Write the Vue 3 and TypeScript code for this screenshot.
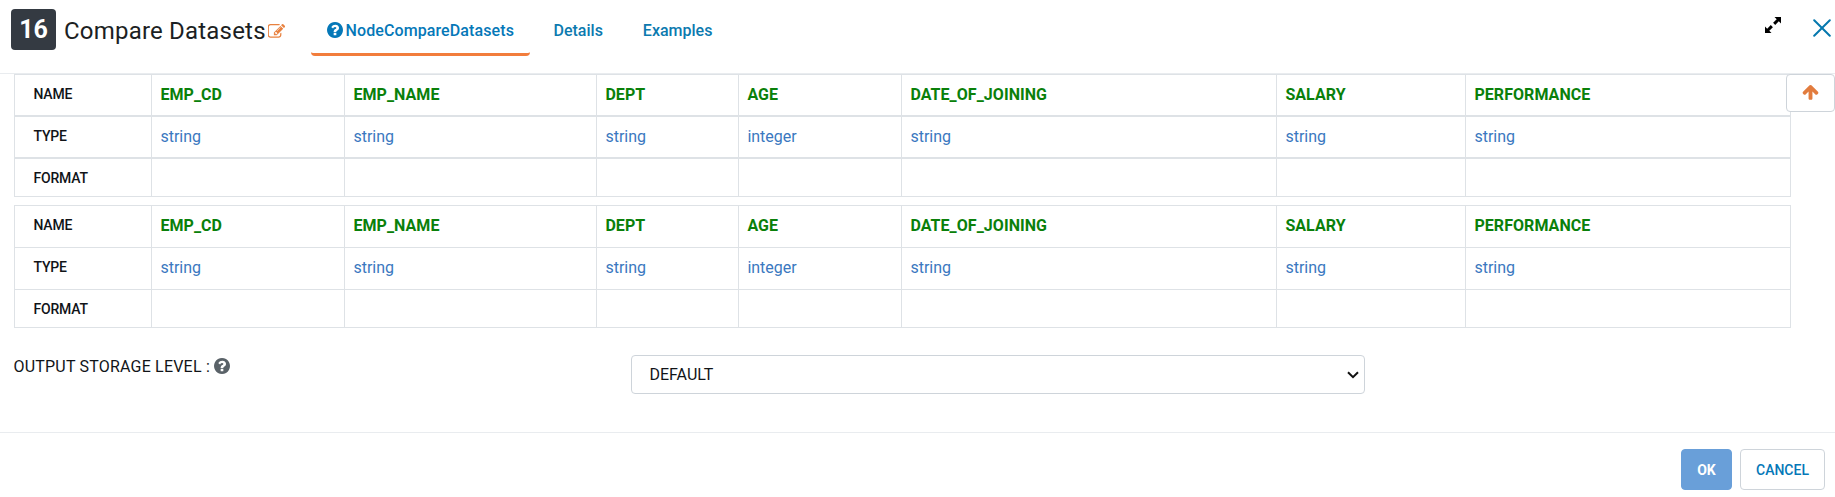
<script setup lang="ts">
import { ref } from 'vue'

interface Column {
  name: string
  type: string
  format: string
}

const columns: Column[] = [
  { name: 'EMP_CD', type: 'string', format: '' },
  { name: 'EMP_NAME', type: 'string', format: '' },
  { name: 'DEPT', type: 'string', format: '' },
  { name: 'AGE', type: 'integer', format: '' },
  { name: 'DATE_OF_JOINING', type: 'string', format: '' },
  { name: 'SALARY', type: 'string', format: '' },
  { name: 'PERFORMANCE', type: 'string', format: '' },
]

const rows: { label: string; key: keyof Column }[] = [
  { label: 'NAME', key: 'name' },
  { label: 'TYPE', key: 'type' },
  { label: 'FORMAT', key: 'format' },
]

const schemas = [
  { id: 1, columns, split: true },
  { id: 2, columns, split: false },
]

const tabs = ['NodeCompareDatasets', 'Details', 'Examples']
const activeTab = ref(tabs[0])
const storageLevel = ref('DEFAULT')

const questionPath =
  'M1024 1376v-192q0-14-9-23t-23-9h-192q-14 0-23 9t-9 23v192q0 14 9 23t23 9h192q14 0 23-9t9-23zm256-672q0-88-55.5-163t-138.5-116-170-41q-243 0-371 213-15 24 8 42l132 100q7 6 19 6 16 0 25-12 53-68 86-92 34-24 86-24 48 0 85.5 26t37.5 59q0 38-20 61t-68 45q-63 28-115.5 86.5t-52.5 125.5v36q0 14 9 23t23 9h192q14 0 23-9t9-23q0-19 21.5-49.5t54.5-49.5q32-18 49-28.5t46-35 44.5-48 28-60.5 12.5-81zm384 192q0 209-103 385.5t-279.5 279.5-385.5 103-385.5-103-279.5-279.5-103-385.5 103-385.5 279.5-279.5 385.5-103 385.5 103 279.5 279.5 103 385.5z'
</script>

<template>
  <div class="dialog">
    <header class="header">
      <span class="badge">16</span>
      <h1 class="title">Compare Datasets</h1>
      <svg class="edit" viewBox="128 128 1664 1536">
        <path d="M888 1184l116-116-152-152-116 116v56h96v96h56zm440-720q-16-16-33 1l-350 350q-17 17-1 33t33-1l350-350q17-17 1-33zm80 594v190q0 119-84.5 203.5t-203.5 84.5h-832q-119 0-203.5-84.5t-84.5-203.5v-832q0-119 84.5-203.5t203.5-84.5h832q63 0 117 25 15 7 18 23 3 17-9 29l-49 49q-14 14-32 8-23-6-45-6h-832q-66 0-113 47t-47 113v832q0 66 47 113t113 47h832q66 0 113-47t47-113v-126q0-13 9-22l64-64q15-15 35-7t20 29zm-96-738l288 288-672 672h-288v-288zm444 132l-92 92-288-288 92-92q28-28 68-28t68 28l152 152q28 28 28 68t-28 68z" />
      </svg>
      <nav class="tabs">
        <a v-for="(tab, i) in tabs" :key="tab" class="tab" :class="{ active: tab === activeTab }" @click="activeTab = tab">
          <svg v-if="i === 0" class="question" viewBox="128 128 1536 1536"><path :d="questionPath" /></svg>
          <span>{{ tab }}</span>
        </a>
      </nav>
      <div class="window-actions">
        <svg class="expand" viewBox="0 0 16 16">
          <path d="M9.5 0H16v6.5l-2.2-2.2-3.6 3.6-2.1-2.1 3.6-3.6zM6.5 16H0V9.5l2.2 2.2 3.6-3.6 2.1 2.1-3.6 3.6z" />
        </svg>
        <svg class="close" viewBox="0 0 18 18"><path d="M1.2 1.2l15.6 15.6M16.8 1.2L1.2 16.8" /></svg>
      </div>
    </header>

    <main class="body">
      <button class="scroll-top" type="button">
        <svg viewBox="53 128 1686 1536"><path d="M1675 971q0 51-37 90l-75 75q-38 38-91 38-54 0-90-38l-294-293v704q0 52-37.5 84.5t-90.5 32.5h-128q-53 0-90.5-32.5t-37.5-84.5v-704l-294 293q-36 38-90 38t-90-38l-75-75q-38-38-38-90 0-53 38-91l651-651q35-37 90-37 54 0 91 37l651 651q37 39 37 91z" /></svg>
      </button>
      <div v-for="schema in schemas" :key="schema.id" class="schema" :class="{ split: schema.split }">
        <div v-for="row in rows" :key="row.key" class="row" :class="row.key">
          <div class="cell label">{{ row.label }}</div>
          <div v-for="col in schema.columns" :key="col.name" class="cell">{{ col[row.key] }}</div>
        </div>
      </div>
      <div class="field">
        <label class="field-label">
          <span>OUTPUT STORAGE LEVEL :</span>
          <svg class="question" viewBox="128 128 1536 1536"><path :d="questionPath" /></svg>
        </label>
        <div class="select-wrap">
          <select v-model="storageLevel" class="select">
            <option>DEFAULT</option>
          </select>
          <svg class="chevron" viewBox="0 0 12 8"><path d="M1 1.2l5 5 5-5" /></svg>
        </div>
      </div>
    </main>

    <footer class="footer">
      <button class="btn ok" type="button">OK</button>
      <button class="btn cancel" type="button">CANCEL</button>
    </footer>
  </div>
</template>

<style>
body {
  background: #fff;
}
</style>

<style scoped>
.dialog,
.dialog * {
  box-sizing: border-box;
}
.dialog {
  display: flex;
  flex-direction: column;
  height: 497px;
  overflow: hidden;
  font-family: Roboto, sans-serif;
  font-size: 16px;
  color: #111418;
}
svg {
  display: block;
  fill: currentColor;
  flex: none;
}
.header {
  display: flex;
  align-items: flex-start;
  height: 74px;
  border-bottom: 1px solid #e9ecef;
}
.badge {
  width: 45px;
  height: 41px;
  margin: 9px 0 0 11px;
  border-radius: 4px;
  background: #343a42;
  color: #fff;
  font-size: 25px;
  font-weight: 700;
  line-height: 42px;
  text-align: center;
}
.title {
  flex: none;
  width: 203px;
  margin: 15px 0 0 8px;
  color: #1c1f23;
  font-size: 24px;
  font-weight: 400;
  line-height: 32px;
  letter-spacing: 0.2px;
  white-space: nowrap;
}
.edit {
  width: 18px;
  height: 15px;
  margin: 24px 0 0 1px;
  color: #e8813f;
}
.tabs {
  display: flex;
  gap: 8px;
  margin-left: 25px;
}
.tab {
  display: flex;
  height: 56px;
  padding: 8px 16px 0;
  border-bottom: 3px solid transparent;
  border-radius: 4px;
  color: #0c7aaf;
  font-weight: 500;
  line-height: 46px;
}
.tab.active {
  width: 219px;
  margin-right: -0.5px;
  border-bottom-color: #f27d3c;
  color: #0578b8;
}
.tab.active span {
  letter-spacing: 0.1px;
}
.question {
  width: 16px;
  height: 16px;
}
.tab .question {
  margin: 14px 3px 0 -0.5px;
}
.window-actions {
  display: flex;
  margin-left: auto;
}
.expand {
  width: 16px;
  height: 16px;
  margin: 17px 32px 0 0;
  color: #000;
}
.close {
  width: 18px;
  height: 18px;
  margin: 19px 4px 0 0;
  stroke: #0578ae;
  stroke-width: 2;
  stroke-linecap: round;
}
.body {
  position: relative;
  flex: none;
  height: 358px;
  padding-left: 14px;
}
.scroll-top {
  position: absolute;
  top: 0;
  right: 0;
  display: flex;
  justify-content: center;
  width: 49px;
  height: 38px;
  padding: 9px 0 0;
  border: 1px solid #ced4da;
  border-radius: 4px;
  background: #fff;
  color: #e27c3e;
}
.scroll-top svg {
  width: 17px;
  height: 16px;
}
.schema {
  width: 1777px;
  margin-bottom: 8px;
  border: 1px solid #dee2e6;
  border-width: 1px 0 0 1px;
}
.row {
  display: grid;
  grid-template-columns: 137px 193px 252px 142px 163px 375px 189px 325px;
  height: 42px;
}
.row.format {
  height: 38px;
}
.split .row {
  height: 41px;
}
.split .row + .row {
  height: 42px;
  border-top: 1px solid #dee2e6;
}
.split .row.format {
  height: 39px;
}
.cell {
  padding: 8px 8.4px 0;
  border: 1px solid #dee2e6;
  border-width: 0 1px 1px 0;
  color: #3a78c0;
  line-height: 24px;
}
.name .cell {
  color: #0a800a;
  font-weight: 700;
  letter-spacing: 0.06px;
}
.row .cell.label {
  padding: 9px 0 0 18.5px;
  color: #111418;
  font-size: 14px;
  font-weight: 500;
  line-height: 20px;
  letter-spacing: -0.2px;
}
.field {
  display: flex;
  padding-top: 19px;
}
.field-label {
  display: flex;
  width: 617px;
  line-height: 24px;
  letter-spacing: 0.2px;
}
.field-label span {
  margin-left: -0.5px;
}
.field-label .question {
  margin: 3px 0 0 4px;
  color: #5a6268;
}
.select-wrap {
  position: relative;
  width: 734px;
}
.select {
  appearance: none;
  display: block;
  width: 100%;
  height: 39px;
  padding: 0 30px 0 17.5px;
  border: 1px solid #ced4da;
  border-radius: 4px;
  background: #fff;
  color: #111418;
  font: 16px Roboto, sans-serif;
}
.chevron {
  position: absolute;
  top: 16px;
  right: 6px;
  width: 12px;
  height: 8px;
  fill: none;
  stroke: #111;
  stroke-width: 2;
  pointer-events: none;
}
.footer {
  display: flex;
  justify-content: flex-end;
  gap: 8px;
  height: 65px;
  padding: 16px 10px 0 0;
  border-top: 1px solid #e9ecef;
}
.btn {
  height: 41px;
  padding: 0;
  border: 1px solid #ced4da;
  border-radius: 4px;
  background: #fff;
  color: #0578b8;
  font: 500 14px Roboto, sans-serif;
}
.ok {
  width: 51px;
  border-color: #699fd9;
  background: #699fd9;
  color: #fff;
  font-weight: 700;
}
.cancel {
  width: 85px;
}
</style>
